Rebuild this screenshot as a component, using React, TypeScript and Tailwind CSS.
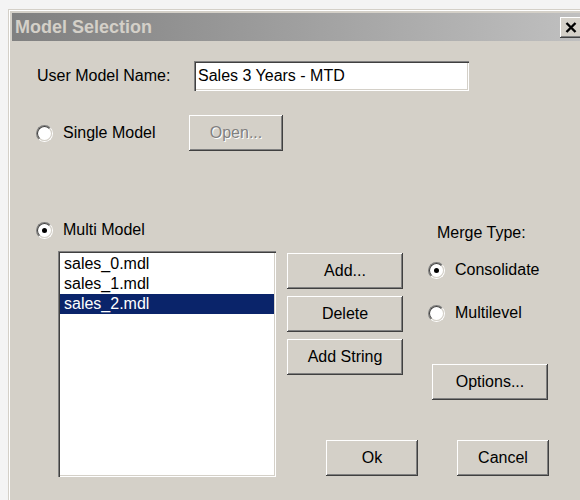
import type { ReactNode } from 'react';

const raised =
  'shadow-[inset_-1px_-1px_#404040,inset_1px_1px_#ffffff,inset_-2px_-2px_#808080,inset_2px_2px_#d4d0c8]';
const sunken =
  'shadow-[inset_1px_1px_#808080,inset_2px_2px_#404040,inset_-1px_-1px_#ffffff,inset_-2px_-2px_#d4d0c8]';

function Button({
  children,
  className = '',
  disabled = false,
}: {
  children: ReactNode;
  className?: string;
  disabled?: boolean;
}) {
  return (
    <button
      type="button"
      className={`flex shrink-0 items-center justify-center bg-[#d4d0c8] text-[16px] leading-[18px] ${raised} ${
        disabled ? 'text-[#808080] [text-shadow:1px_1px_0_#ffffff]' : 'text-black'
      } ${className}`}
    >
      {children}
    </button>
  );
}

function Radio({ checked = false }: { checked?: boolean }) {
  return (
    <span className="flex h-[17px] w-[17px] shrink-0 rounded-full border border-t-[#808080] border-l-[#808080] border-r-white border-b-white">
      <span className="flex h-full w-full items-center justify-center rounded-full border border-t-[#404040] border-l-[#404040] border-r-[#d4d0c8] border-b-[#d4d0c8] bg-white">
        {checked && <span className="h-[5px] w-[5px] rounded-full bg-black" />}
      </span>
    </span>
  );
}

function RadioLabel({ label, checked, className = '' }: { label: string; checked?: boolean; className?: string }) {
  return (
    <label className={`flex items-center gap-[10px] ${className}`}>
      <Radio checked={checked} />
      <span>{label}</span>
    </label>
  );
}

const models = ['sales_0.mdl', 'sales_1.mdl', 'sales_2.mdl'];

export default function App() {
  return (
    <div className="h-[500px] w-[580px] overflow-hidden bg-[#f4f4f4] pt-[9px] font-['Liberation_Sans',Arial,sans-serif] text-[16px] leading-[18px] text-black">
      <div className="ml-[8px] h-[520px] w-[580px] border-t border-l border-[#d4d0c8]">
        <div className="h-full border-t border-l border-white bg-[#d4d0c8] pt-[2px] pl-[2px]">
          {/* title bar */}
          <div className="flex h-[28px] w-[572px] items-center justify-between bg-linear-to-r from-[#808080] to-[#c0c0c0] pl-[3px] pr-[2px]">
            <span className="text-[18px] font-bold leading-[20px] text-[#d4d0c8]">Model Selection</span>
            <button type="button" className={`flex h-[21px] w-[22px] items-center justify-center bg-[#d4d0c8] ${raised}`}>
              <svg width="12" height="11" viewBox="0 0 12 11">
                <path d="M1.5 1 L10.5 10 M10.5 1 L1.5 10" stroke="#000" strokeWidth="2.4" />
              </svg>
            </button>
          </div>

          <div className="pl-[24px] pt-[20px]">
            {/* name */}
            <div className="flex items-center">
              <span className="w-[158px] pl-px">User Model Name:</span>
              <div className={`flex h-[30px] w-[275px] items-center bg-white pl-[4px] ${sunken}`}>
                Sales 3 Years - MTD
              </div>
            </div>

            {/* single model */}
            <div className="mt-[24px] flex items-center">
              <RadioLabel label="Single Model" className="w-[153px]" />
              <Button disabled className="h-[36px] w-[94px]">
                Open...
              </Button>
            </div>

            {/* multi model */}
            <div className="mt-[70px] flex gap-[11px]">
              <div className="flex w-[240px] flex-col">
                <RadioLabel label="Multi Model" checked />
                <div className={`ml-[22px] mt-[12px] h-[226px] w-[218px] bg-white p-[2px] pt-[3px] ${sunken}`}>
                  {models.map((m, i) => (
                    <div
                      key={m}
                      className={`h-[20px] pl-[4px] leading-[20px] ${i === 2 ? 'bg-[#0a246a] text-white' : ''}`}
                    >
                      {m}
                    </div>
                  ))}
                </div>
              </div>

              <div className="flex flex-col">
                <span className="mt-[3px] pl-[150px]">Merge Type:</span>
                <div className="mt-[11px] flex gap-[25px]">
                  <div className="flex flex-col gap-[7px]">
                    <Button className="h-[36px] w-[116px]">Add...</Button>
                    <Button className="h-[36px] w-[116px]">Delete</Button>
                    <Button className="h-[36px] w-[116px]">Add String</Button>
                  </div>
                  <div className="flex flex-col">
                    <RadioLabel label="Consolidate" checked className="mt-[8px]" />
                    <RadioLabel label="Multilevel" className="mt-[25px]" />
                    <Button className="ml-[4px] mt-[42px] h-[36px] w-[116px]">Options...</Button>
                  </div>
                </div>
                <div className="mt-[40px] flex gap-[39px] pl-[39px]">
                  <Button className="h-[36px] w-[92px]">Ok</Button>
                  <Button className="h-[36px] w-[92px]">Cancel</Button>
                </div>
              </div>
            </div>
          </div>
        </div>
      </div>
    </div>
  );
}
